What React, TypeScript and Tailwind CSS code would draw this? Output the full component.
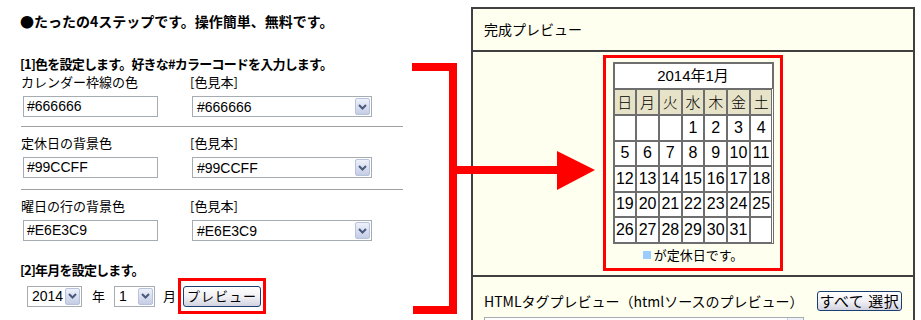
import React from 'react';

const jp = "font-['Noto_Sans_CJK_JP',sans-serif]";
const latin = "font-['Liberation_Sans','Noto_Sans_CJK_JP',sans-serif]";

const DropArrow = () => (
  <div className="flex h-[17px] w-[15px] items-center justify-center rounded-[2px] border border-[#b7c3dc] bg-gradient-to-b from-[#eef1fa] to-[#c5cde6]">
    <svg width="9" height="6" viewBox="0 0 9 6">
      <path d="M1 1 L4.5 4.5 L8 1" fill="none" stroke="#4a5a7c" strokeWidth="2" />
    </svg>
  </div>
);

const Select: React.FC<{ value: string; width: string }> = ({ value, width }) => (
  <div className={`flex h-[21px] items-center justify-between border border-[#a5acb2] bg-white pl-[4px] pr-[1px] ${width}`}>
    <span className={`${latin} text-[14px] leading-none`}>{value}</span>
    <DropArrow />
  </div>
);

const ColorRow: React.FC<{ label: string; value: string }> = ({ label, value }) => (
  <div className="pl-[1px]">
    <div className="flex h-[18px] items-center text-[13px] leading-[18px]">
      <span className="w-[169px]">{label}</span>
      <span>[色見本]</span>
    </div>
    <div className="mt-[5px] flex">
      <div className="w-[169px] pl-[2px]">
        <div className={`flex h-[21px] w-[135px] items-center border border-[#a5acb2] bg-white px-[3px] ${latin} text-[14px]`}>
          {value}
        </div>
      </div>
      <div className="pl-[2px]">
        <Select value={value} width="w-[180px]" />
      </div>
    </div>
  </div>
);

const XpButton: React.FC<{ children: React.ReactNode; className?: string }> = ({ children, className }) => (
  <div
    className={`flex items-center justify-center rounded-[3px] border border-[#1c3f73] bg-gradient-to-b from-white via-[#f1f1f5] to-[#d2d3e0] ${className ?? ''}`}
  >
    {children}
  </div>
);

const weeks = [
  ['', '', '', '1', '2', '3', '4'],
  ['5', '6', '7', '8', '9', '10', '11'],
  ['12', '13', '14', '15', '16', '17', '18'],
  ['19', '20', '21', '22', '23', '24', '25'],
  ['26', '27', '28', '29', '30', '31', ''],
];

const Calendar = () => (
  <div className="w-[161px] border border-[#6e6e6e] bg-white">
    <div className={`flex h-[26px] items-center justify-center border border-[#6e6e6e] ${latin} text-[15px]`}>
      2014年1月
    </div>
    <div className="grid grid-cols-7">
      {['日', '月', '火', '水', '木', '金', '土'].map((d) => (
        <div key={d} className="flex h-[26px] items-center justify-center border border-[#6e6e6e] bg-[#E6E3C9] text-[15px] font-light">
          {d}
        </div>
      ))}
      {weeks.flat().map((n, i) => (
        <div
          key={i}
          className={`flex h-[25.5px] items-center justify-center border border-[#6e6e6e] ${latin} text-[16px]`}
        >
          {n}
        </div>
      ))}
    </div>
  </div>
);

export default function App() {
  return (
    <div className={`relative flex h-[320px] w-[921px] overflow-hidden bg-white text-black ${jp}`}>
      {/* left: settings */}
      <div className="w-[471px] shrink-0 pl-[20px] pt-[12px]">
        <div className="text-[14px] font-bold leading-[18px]">●たったの4ステップです。操作簡単、無料です。</div>

        <div className="mt-[25px] text-[13px] font-bold leading-[18px] tracking-[-0.8px]">
          [1]色を設定します。好きな#カラーコードを入力します。
        </div>
        <ColorRow label="カレンダー枠線の色" value="#666666" />
        <div className="ml-[1px] mt-[9px] h-px w-[382px] bg-[#a0a0a0]" />
        <div className="mt-[7px]">
          <ColorRow label="定休日の背景色" value="#99CCFF" />
        </div>
        <div className="ml-[1px] mt-[11px] h-px w-[382px] bg-[#a0a0a0]" />
        <div className="mt-[7px]">
          <ColorRow label="曜日の行の背景色" value="#E6E3C9" />
        </div>

        <div className="mt-[20px] text-[13px] font-bold leading-[18px] tracking-[-0.8px]">[2]年月を設定します。</div>
        <div className="-mt-[1px] flex h-[36px] items-center pl-[7px] text-[13px]">
          <Select value="2014" width="w-[55px]" />
          <span className="ml-[10px] w-[22px]">年</span>
          <Select value="1" width="w-[41px]" />
          <span className="ml-[8px] w-[15px]">月</span>
          <div className="flex h-[36px] items-center border-[3px] border-[#ff0000] px-[2px]">
            <XpButton className="h-[21px] w-[78px] text-[13px] tracking-[1px]">プレビュー</XpButton>
          </div>
        </div>
      </div>

      {/* right: preview panel */}
      <div className="mt-[7px] w-[444px] shrink-0 self-start border-2 border-[#404040] bg-[#fffff0]">
        <div className="flex h-[41px] items-center pl-[11px] text-[14px]">完成プレビュー</div>
        <div className="h-[2px] bg-[#404040]" />
        <div className="flex h-[223px] justify-center pt-[3px]">
          <div className="flex h-[216px] w-[180px] flex-col items-center border-[3px] border-[#ff0000] pt-[4px]">
            <Calendar />
            <div className="mt-[2px] flex items-center text-[13px] leading-[18px]">
              <span className="mr-[3px] inline-block h-[8px] w-[8px] bg-[#99CCFF]" />
              が定休日です。
            </div>
          </div>
        </div>
        <div className="h-[2px] bg-[#404040]" />
        <div className="px-[11px] pt-[14px]">
          <div className="flex items-center gap-[16px]">
            <span className="text-[14px] leading-[18px]">HTMLタグプレビュー（htmlソースのプレビュー）</span>
            <XpButton className="h-[20px] w-[86px] text-[15px] tracking-[0.5px]">すべて 選択</XpButton>
          </div>
          <div className="mt-[6px] flex h-[40px] w-[320px] border border-[#a5acb2] bg-white">
            <div className="flex-1" />
            <div className="w-[16px] border-l border-[#c5cde6] bg-[#eef1fa]" />
          </div>
        </div>
      </div>

      {/* red bracket + arrow */}
      <svg className="pointer-events-none absolute left-0 top-0" width="921" height="320">
        <path d="M412 67 H453 V310 H413" fill="none" stroke="#ff0000" strokeWidth="8" />
        <path d="M453 170 H560" fill="none" stroke="#ff0000" strokeWidth="8" />
        <polygon points="557,151 595,170 557,190" fill="#ff0000" />
      </svg>
    </div>
  );
}
